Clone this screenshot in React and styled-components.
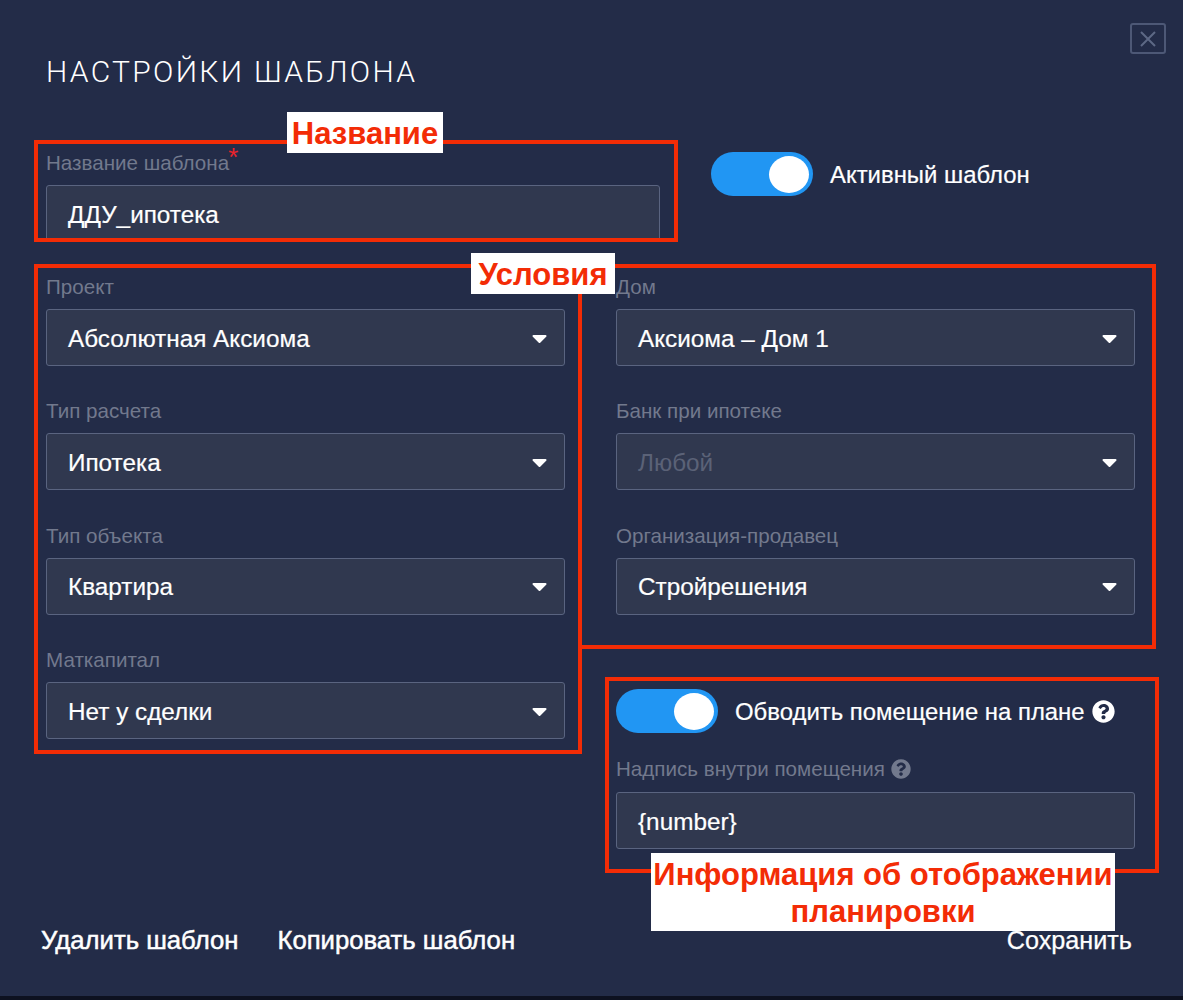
import React from 'react';
import styled, { createGlobalStyle } from 'styled-components';
import { FaQuestionCircle } from 'react-icons/fa';

const GlobalStyle = createGlobalStyle`
  html, body {
    margin: 0;
    padding: 0;
    background: #0d1120;
  }
  body {
    font-family: "Liberation Sans", Arial, sans-serif;
  }
`;

const Modal = styled.div`
  position: relative;
  box-sizing: border-box;
  width: 1183px;
  height: 996px;
  padding: 0 48px 0 46px;
  background: #232c48;
  color: #fff;
  overflow: hidden;
`;

const CloseButton = styled.button`
  position: absolute;
  top: 23px;
  right: 17px;
  display: flex;
  align-items: center;
  justify-content: center;
  box-sizing: border-box;
  width: 36px;
  height: 31px;
  padding: 0;
  background: transparent;
  border: 2px solid #4d5876;
  border-radius: 3px;
`;

const Title = styled.h1`
  margin: 0;
  padding-top: 54px;
  height: 152px;
  box-sizing: border-box;
  font-family: Roboto, "Liberation Sans", sans-serif;
  font-size: 30px;
  line-height: 36px;
  font-weight: 300;
  letter-spacing: 2.3px;
  white-space: nowrap;
`;

const Columns = styled.div`
  display: grid;
  grid-template-columns: 519px 519px;
  column-gap: 51px;
`;

const Column = styled.div`
  display: flex;
  flex-direction: column;
  gap: 34.45px;
`;

const TopRow = styled.div`
  display: grid;
  grid-template-columns: 614px auto;
  column-gap: 51px;
  height: 124px;
`;

const Field = styled.div`
  display: flex;
  flex-direction: column;
`;

const Label = styled.label`
  display: flex;
  align-items: center;
  gap: 6px;
  height: 22px;
  margin-bottom: 11px;
  font-size: 20.6px;
  line-height: 22px;
  color: #72798d;
`;

const Required = styled.sup`
  align-self: flex-start;
  margin: -6px 0 0 -7px;
  font-size: 26px;
  line-height: 22px;
  color: #e8232c;
`;

const Control = styled.div`
  display: flex;
  align-items: center;
  justify-content: space-between;
  box-sizing: border-box;
  height: 57px;
  padding: 2px 17px 0 21px;
  background: #30384f;
  border: 1px solid #5a6480;
  border-radius: 3px;
  font-size: 24.3px;
  -webkit-text-stroke: ${({ $muted }) => ($muted ? '0' : '0.2px #fff')};
  color: ${({ $muted }) => ($muted ? '#5b6277' : '#fff')};
`;

const SwitchRow = styled.div`
  display: flex;
  align-items: center;
  gap: 17px;
  font-size: 23.9px;
  -webkit-text-stroke: 0.2px #fff;
  color: #fff;
`;

const SwitchText = styled.span`
  padding-top: 2px;
`;

const ActiveRow = styled(SwitchRow)`
  align-self: start;
`;

const Track = styled.span`
  position: relative;
  flex: none;
  width: 102px;
  height: 44px;
  border-radius: 22px;
  background: #2196f3;
`;

const Knob = styled.span`
  position: absolute;
  top: 4px;
  right: 4px;
  width: 40px;
  height: 37px;
  border-radius: 50%;
  background: #fff;
`;

const DisplayGroup = styled.div`
  display: flex;
  flex-direction: column;
  margin-top: 39.8px;
`;

const DisplayField = styled(Field)`
  margin-top: 25px;

  ${Label} {
    margin-bottom: 12px;
  }
`;

const HelpLabelRow = styled(SwitchRow)`
  gap: 7px;
`;

const Footer = styled.div`
  position: absolute;
  left: 41px;
  right: 51px;
  top: 926px;
  display: flex;
  align-items: center;
  gap: 39px;
`;

const FooterButton = styled.button`
  padding: 0;
  background: none;
  border: none;
  font-family: inherit;
  font-size: 25.7px;
  line-height: 28px;
  -webkit-text-stroke: 0.5px #fff;
  color: #fff;
  white-space: nowrap;
`;

const SaveButton = styled(FooterButton)`
  margin-left: auto;
  font-size: 25.2px;
  -webkit-text-stroke: 0.25px #fff;
`;

// red marks that were put on top of the screenshot
const Frame = styled.div`
  position: absolute;
  box-sizing: border-box;
  left: ${({ $x }) => $x}px;
  top: ${({ $y }) => $y}px;
  width: ${({ $w }) => $w}px;
  height: ${({ $h }) => $h}px;
  border: 4px solid #f32c06;
  pointer-events: none;
`;

const Note = styled.div`
  position: absolute;
  box-sizing: border-box;
  left: ${({ $x }) => $x}px;
  top: ${({ $y }) => $y}px;
  width: ${({ $w }) => $w}px;
  height: ${({ $h }) => $h}px;
  padding-top: 3px;
  background: #fff;
  color: #f32c06;
  font-size: 31px;
  line-height: 37px;
  font-weight: 700;
  text-align: center;
  white-space: nowrap;
`;

const Arrow = () => (
  <svg width="15" height="10" viewBox="0 0 15 10">
    <path d="M1.5 2h12l-6 6z" fill="#fff" stroke="#fff" strokeWidth="2" strokeLinejoin="round" />
  </svg>
);

const SelectField = ({ label, value, muted }) => (
  <Field>
    <Label>{label}</Label>
    <Control $muted={muted}>
      <span>{value}</span>
      <Arrow />
    </Control>
  </Field>
);

const Switch = () => (
  <Track>
    <Knob />
  </Track>
);

const App = () => (
  <>
    <GlobalStyle />
    <Modal>
      <CloseButton aria-label="Закрыть">
        <svg width="18" height="18" viewBox="0 0 18 18">
          <path d="M2 2l14 14M16 2L2 16" stroke="#5d6885" strokeWidth="2" fill="none" />
        </svg>
      </CloseButton>
      <Title>НАСТРОЙКИ ШАБЛОНА</Title>

      <TopRow>
        <Field>
          <Label>
            Название шаблона<Required>*</Required>
          </Label>
          <Control>ДДУ_ипотека</Control>
        </Field>
        <ActiveRow>
          <Switch />
          <SwitchText>Активный шаблон</SwitchText>
        </ActiveRow>
      </TopRow>

      <Columns>
        <Column>
          <SelectField label="Проект" value="Абсолютная Аксиома" />
          <SelectField label="Тип расчета" value="Ипотека" />
          <SelectField label="Тип объекта" value="Квартира" />
          <SelectField label="Маткапитал" value="Нет у сделки" />
        </Column>
        <Column>
          <SelectField label="Дом" value="Аксиома – Дом 1" />
          <SelectField label="Банк при ипотеке" value="Любой" muted />
          <SelectField label="Организация-продавец" value="Стройрешения" />
          <DisplayGroup>
            <SwitchRow>
              <Switch />
              <HelpLabelRow>
                <SwitchText>Обводить помещение на плане</SwitchText>
                <FaQuestionCircle size={23} color="#fff" />
              </HelpLabelRow>
            </SwitchRow>
            <DisplayField>
              <Label>
                Надпись внутри помещения
                <FaQuestionCircle size={20} color="#72798d" />
              </Label>
              <Control>{'{number}'}</Control>
            </DisplayField>
          </DisplayGroup>
        </Column>
      </Columns>

      <Footer>
        <FooterButton>Удалить шаблон</FooterButton>
        <FooterButton>Копировать шаблон</FooterButton>
        <SaveButton>Сохранить</SaveButton>
      </Footer>

      <Frame $x={34} $y={140} $w={644} $h={102} />
      <Frame $x={34} $y={264} $w={548} $h={490} />
      <Frame $x={578} $y={264} $w={578} $h={385} />
      <Frame $x={605} $y={677} $w={554} $h={196} />
      <Note $x={287} $y={112} $w={156} $h={41}>Название</Note>
      <Note $x={471} $y={253} $w={144} $h={41}>Условия</Note>
      <Note $x={651} $y={853} $w={464} $h={78}>
        Информация об отображении
        <br />
        планировки
      </Note>
    </Modal>
  </>
);

export default App;
